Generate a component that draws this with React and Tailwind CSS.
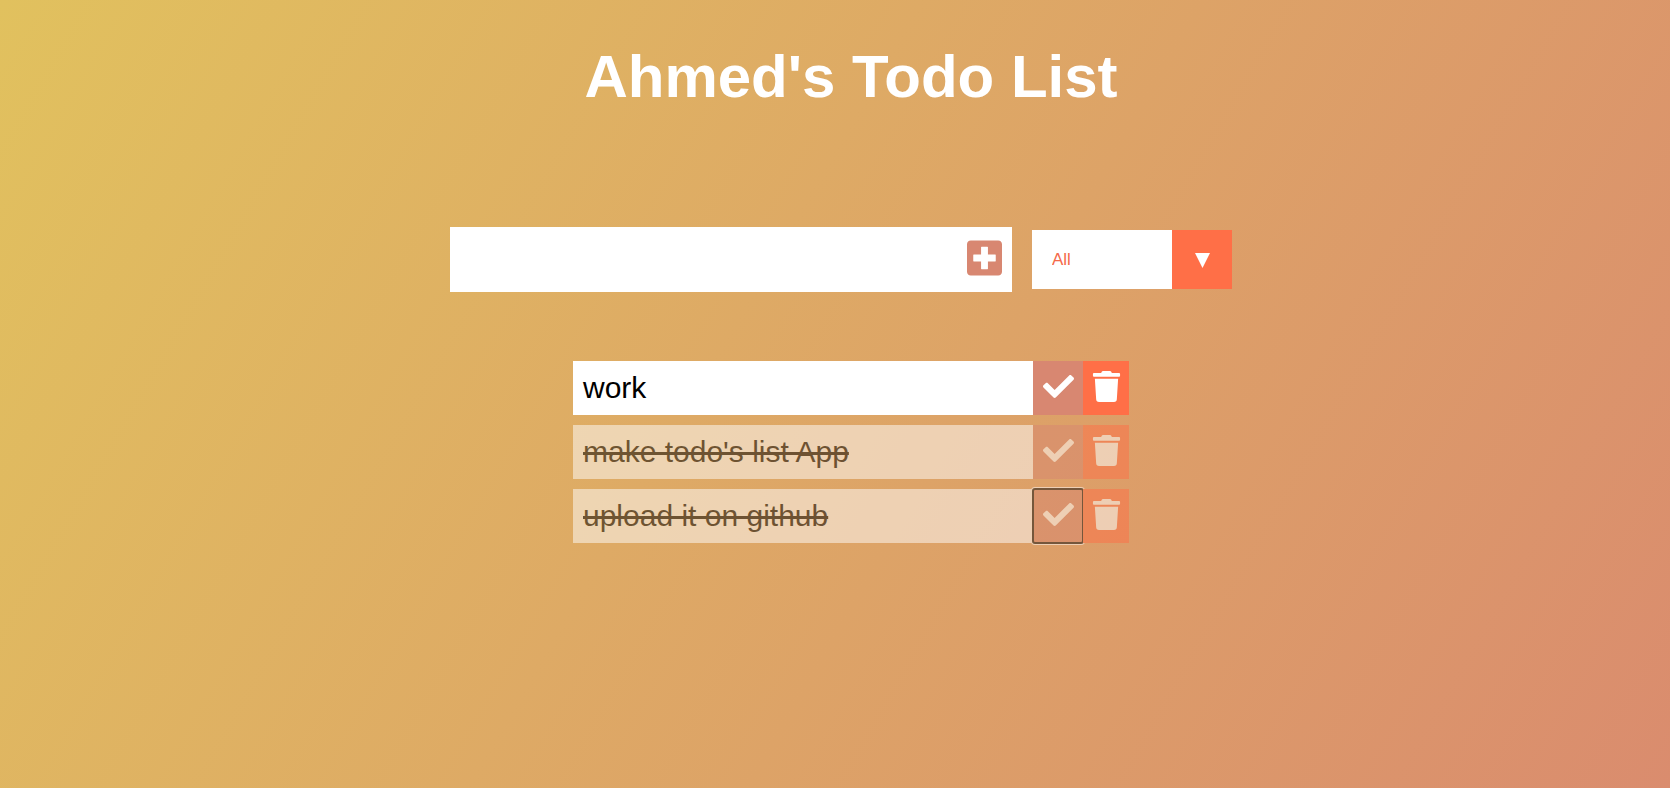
import { useState } from "react";
import { FaCheck, FaTrash } from "react-icons/fa";

const initialTodos = [
  { id: 1, text: "work", done: false },
  { id: 2, text: "make todo's list App", done: true },
  { id: 3, text: "upload it on github", done: true, focused: true },
];

function PlusSquareIcon() {
  return (
    <svg className="h-10 w-[35px]" viewBox="0 0 448 512" fill="currentColor" aria-hidden="true">
      <path d="M400 32H48C21.5 32 0 53.5 0 80v352c0 26.5 21.5 48 48 48h352c26.5 0 48-21.5 48-48V80c0-26.5-21.5-48-48-48zm-32 262c0 3.3-2.7 6-6 6H268v94c0 3.3-2.7 6-6 6h-76c-3.3 0-6-2.7-6-6v-94H86c-3.3 0-6-2.7-6-6v-76c0-3.3 2.7-6 6-6h94v-94c0-3.3 2.7-6 6-6h76c3.3 0 6 2.7 6 6v94h94c3.3 0 6 2.7 6 6z" />
    </svg>
  );
}

function TodoItem({ todo, onToggle, onDelete }) {
  return (
    <li className={`flex bg-white text-3xl/[54px] text-black ${todo.done ? "opacity-50" : ""}`}>
      <span className={`min-w-0 flex-1 px-2.5 ${todo.done ? "line-through" : ""}`}>{todo.text}</span>
      <button
        type="button"
        aria-label={`Complete ${todo.text}`}
        onClick={onToggle}
        className={`flex w-[50px] justify-center bg-[#d88771] pt-2.5 text-white ${
          todo.focused
            ? "rounded-xs outline-2 -outline-offset-1 outline-[#101010] ring-2 ring-white"
            : ""
        }`}
      >
        <FaCheck size={31} />
      </button>
      <button
        type="button"
        aria-label={`Delete ${todo.text}`}
        onClick={onDelete}
        className="flex w-[46px] justify-center bg-[#ff6f47] pt-2.5 text-white"
      >
        <FaTrash size={31} />
      </button>
    </li>
  );
}

export default function App() {
  const [todos, setTodos] = useState(initialTodos);
  const [text, setText] = useState("");
  const [filter, setFilter] = useState("all");

  const addTodo = (event) => {
    event.preventDefault();
    if (!text.trim()) return;
    setTodos([...todos, { id: Date.now(), text, done: false }]);
    setText("");
  };
  const visible = todos.filter(
    (todo) => filter === "all" || (filter === "completed") === todo.done
  );

  return (
    <div className="min-h-screen bg-[linear-gradient(120deg,#e1c15e,#da8c6e)] pl-8 font-['Liberation_Sans',Arial,sans-serif]">
      <header className="flex justify-center pt-[41px]">
        <h1 className="text-6xl/[72px] font-bold text-white">Ahmed's Todo List</h1>
      </header>

      <form onSubmit={addTodo} className="flex items-center justify-center gap-5 pt-[114px] pr-5">
        <div className="flex h-[65px] w-[562px] items-center bg-white pr-2.5">
          <input
            type="text"
            aria-label="New todo"
            value={text}
            onChange={(event) => setText(event.target.value)}
            className="h-full min-w-0 flex-1 px-2.5 text-3xl outline-none"
          />
          <button type="submit" aria-label="Add todo" className="pb-1 text-[#d88771]">
            <PlusSquareIcon />
          </button>
        </div>
        <div className="grid w-[200px] grid-cols-[1fr_60px]">
          <select
            aria-label="Filter todos"
            value={filter}
            onChange={(event) => setFilter(event.target.value)}
            className="col-span-2 col-start-1 row-start-1 h-[59px] appearance-none bg-white pl-5 text-[17px] text-[#f5694a] outline-none"
          >
            <option value="all">All</option>
            <option value="completed">Completed</option>
            <option value="uncompleted">Uncompleted</option>
          </select>
          <span
            aria-hidden="true"
            className="pointer-events-none z-10 col-start-2 row-start-1 flex items-center justify-center bg-[#ff6f47] pt-0.5 text-white"
          >
            <svg width="15" height="15" viewBox="0 0 15 15" fill="currentColor">
              <path d="M0 0h15L7.5 15z" />
            </svg>
          </span>
        </div>
      </form>

      <ul className="mx-auto flex w-[556px] flex-col gap-2.5 pt-[69px]">
        {visible.map((todo) => (
          <TodoItem
            key={todo.id}
            todo={todo}
            onToggle={() =>
              setTodos(todos.map((t) => (t.id === todo.id ? { ...t, done: !t.done } : t)))
            }
            onDelete={() => setTodos(todos.filter((t) => t.id !== todo.id))}
          />
        ))}
      </ul>
    </div>
  );
}
